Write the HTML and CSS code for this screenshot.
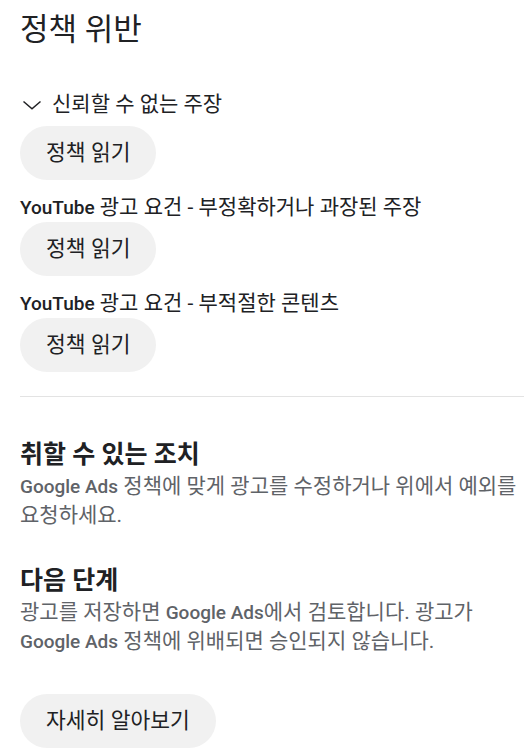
FILE: index.html
```html
<!DOCTYPE html>
<html lang="ko">
<head>
<meta charset="utf-8">
<link rel="stylesheet" href="styles.css">
</head>
<body>
<div class="panel">
  <h1 class="title">정책 위반</h1>
  <div class="topic">
    <svg class="chev" width="20" height="10" viewBox="0 0 20 10"><path d="M1.5 1.5 L10 8.8 L18.5 1.5" fill="none" stroke="#202124" stroke-width="1.5"/></svg>
    <span>신뢰할 수 없는 주장</span>
  </div>
  <button class="pill">정책 읽기</button>
  <div class="policy"><b class="lat">YouTube</b> 광고 요건 - 부정확하거나 과장된 주장</div>
  <button class="pill pill-after">정책 읽기</button>
  <div class="policy"><b class="lat">YouTube</b> 광고 요건 - 부적절한 콘텐츠</div>
  <button class="pill pill-after">정책 읽기</button>
  <hr class="divider">
  <section class="block">
    <h2 class="heading">취할 수 있는 조치</h2>
    <p class="desc"><b class="lat">Google Ads</b> 정책에 맞게 광고를 수정하거나 위에서 예외를 요청하세요.</p>
  </section>
  <section class="block block-next">
    <h2 class="heading">다음 단계</h2>
    <p class="desc">광고를 저장하면 <b class="lat">Google Ads</b>에서 검토합니다. 광고가 <b class="lat">Google Ads</b> 정책에 위배되면 승인되지 않습니다.</p>
  </section>
  <button class="pill pill-wide">자세히 알아보기</button>
</div>
</body>
</html>
```

FILE: styles.css
```css
html, body {
  margin: 0;
  padding: 0;
  background: #ffffff;
}
body {
  font-family: Roboto, "Noto Sans CJK KR", sans-serif;
  color: #202124;
  word-break: keep-all;
}
.panel {
  padding: 10px 8px 0 20px;
  display: flex;
  flex-direction: column;
  align-items: flex-start;
}
.title {
  margin: 0;
  font-size: 31px;
  font-weight: 400;
  line-height: 40px;
}
.topic {
  display: flex;
  align-items: center;
  gap: 10px;
  margin-top: 42px;
  padding-left: 2px;
  font-size: 21px;
  line-height: 24px;
}
.chev {
  display: block;
  margin-top: 2px;
}
.pill {
  margin: 10px 0 0 0;
  border: none;
  background: #f1f1f1;
  border-radius: 27px;
  height: 54px;
  padding: 0 26px;
  font-family: Roboto, "Noto Sans CJK KR", sans-serif;
  font-size: 21.5px;
  line-height: 24px;
  color: #202124;
}
.pill-after {
  margin-top: 3px;
}
.policy {
  margin-top: 15px;
  font-size: 21px;
  line-height: 24px;
}
.lat {
  font-size: 19px;
  font-weight: 500;
  line-height: 1;
}
.divider {
  align-self: stretch;
  margin: 24px 0 0 0;
  border: none;
  border-top: 1px solid #e3e3e3;
}
.block {
  margin-top: 43px;
}
.block-next {
  margin-top: 36px;
}
.heading {
  margin: 0;
  font-size: 25px;
  font-weight: 700;
  line-height: 30px;
}
.desc {
  margin: 2px 0 0 0;
  font-size: 21px;
  line-height: 29px;
  color: #5f6368;
}
.pill-wide {
  margin-top: 38px;
}
```
